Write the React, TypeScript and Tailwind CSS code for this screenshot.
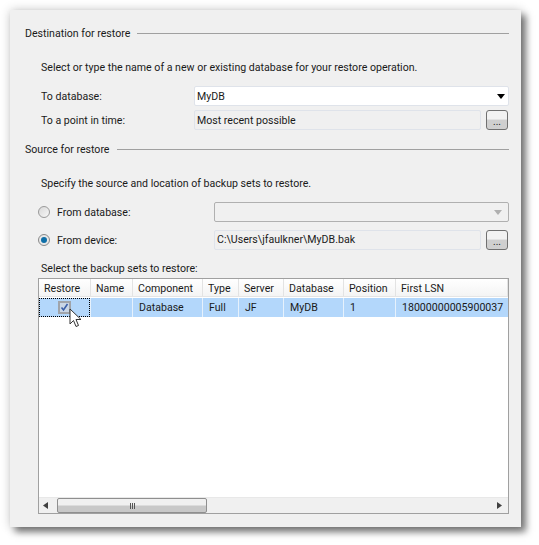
function Group({ title }: { title: string }) {
  return (
    <div className="flex h-[16px] items-center gap-[7px]">
      <span className="whitespace-nowrap pt-[2px]">{title}</span>
      <div className="h-[1px] flex-1 bg-[#a0a0a0]" />
    </div>
  );
}
function Dots() {
  return (
    <div className="flex h-[20px] w-[22px] items-end justify-center rounded-[3px] border border-[#707070] bg-gradient-to-b from-[#f2f2f2] from-45% to-[#cfcfcf] to-50% pb-[2px] text-[10px] leading-[10px]">
      ...
    </div>
  );
}
const cols = [
  { w: 52, h: "Restore", v: "" },
  { w: 42, h: "Name", v: "" },
  { w: 70, h: "Component", v: "Database" },
  { w: 36, h: "Type", v: "Full" },
  { w: 45, h: "Server", v: "JF" },
  { w: 60, h: "Database", v: "MyDB" },
  { w: 52, h: "Position", v: "1" },
  { w: 112, h: "First LSN", v: "18000000005900037" },
];
export default function App() {
  return (
    <div className="h-[545px] w-[539px] overflow-hidden bg-white pl-[10px] pt-[10px] font-['Roboto',sans-serif] text-[10.6px] leading-[16px] text-[#1a1a1a]">
      <div className="flex h-[517px] w-[511px] flex-col bg-[#f0f0f0] pl-[15px] pr-[12px] pt-[15px] shadow-[5px_5px_7px_rgba(0,0,0,0.5),0_0_10px_rgba(0,0,0,0.2)]">
        <Group title="Destination for restore" />
        <div className="ml-[16px] mt-[19px]">Select or type the name of a new or existing database for your restore operation.</div>
        <div className="mt-[10px] flex h-[20px] items-center">
          <span className="w-[169px] pl-[16px] pt-[2px] shrink-0">To database:</span>
          <div className="flex h-[20px] w-[315px] items-center justify-between rounded-[2px] border border-[#dfe3ea] bg-white pl-[2px] pr-[3px]">
            <span className="pt-[1px]">MyDB</span>
            <svg width="8" height="5" viewBox="0 0 8 5"><path d="M0 0h8L4 5z" fill="#000" /></svg>
          </div>
        </div>
        <div className="mt-[4px] flex h-[20px] items-center">
          <span className="w-[169px] pl-[16px] pt-[2px] shrink-0">To a point in time:</span>
          <div className="flex h-[20px] w-[287px] items-center rounded-[2px] border border-[#dfe3ea] bg-[#f0f0f0] pl-[2px]">
            <span className="pt-[1px]">Most recent possible</span>
          </div>
          <div className="ml-[5px]"><Dots /></div>
        </div>
        <div className="mt-[11px]"><Group title="Source for restore" /></div>
        <div className="ml-[16px] mt-[19px]">Specify the source and location of backup sets to restore.</div>
        <div className="mt-[10px] flex h-[20px] items-center">
          <div className="ml-[13px] h-[12px] w-[12px] shrink-0 rounded-full border border-[#9a9a9a] bg-gradient-to-br from-[#d8d8d8] to-[#f8f8f8]" />
          <span className="ml-[7px] w-[157px] pt-[2px] shrink-0">From database:</span>
          <div className="flex h-[20px] w-[295px] items-center justify-end rounded-[2px] border border-[#b0b0b0] bg-[#f0f0f0] pr-[6px]">
            <svg width="8" height="5" viewBox="0 0 8 5"><path d="M0 0h8L4 5z" fill="#b0b0b0" /></svg>
          </div>
        </div>
        <div className="mt-[8px] flex h-[20px] items-center">
          <div className="ml-[13px] flex h-[12px] w-[12px] shrink-0 items-center justify-center rounded-full border border-[#8a8a8a] bg-[#e8e8e8]">
            <div className="h-[6px] w-[6px] rounded-full bg-[#0f6fa8]" />
          </div>
          <span className="ml-[7px] w-[157px] pt-[2px] shrink-0">From device:</span>
          <div className="flex h-[20px] w-[267px] items-center rounded-[2px] border border-[#dfe3ea] bg-[#f0f0f0] pl-[2px]">C:\Users\jfaulkner\MyDB.bak</div>
          <div className="ml-[5px]"><Dots /></div>
        </div>
        <div className="ml-[16px] mt-[11px]">Select the backup sets to restore:</div>
        <div className="relative mt-[1px] ml-[13px] flex h-[236px] w-[471px] flex-col border border-[#a0a0a0] bg-white">
          <div className="flex h-[18px] border-b border-[#e5e5e5] bg-gradient-to-b from-white to-[#f4f4f4]">
            {cols.map((c) => (
              <div key={c.h} style={{ width: c.w }} className="shrink-0 border-r border-[#e3e3e3] pl-[5px] whitespace-nowrap leading-[19px]">{c.h}</div>
            ))}
          </div>
          <div className="mt-[1px] flex h-[19px] bg-[#b3d7fb]">
            {cols.map((c, i) => (
              <div key={c.h} style={{ width: c.w }} className={"relative flex shrink-0 items-center overflow-hidden whitespace-nowrap pl-[6px] " + (i < 7 ? "border-r border-[#e6f1fc]" : "")}>
                {i === 0 ? (
                  <div className="absolute inset-0 flex items-center justify-center border border-dotted border-black">
                    <div className="flex h-[13px] w-[13px] items-center justify-center border-2 border-[#a0a4aa] bg-[#c9d6e6]">
                      <svg width="9" height="9" viewBox="0 0 9 9"><path d="M1.5 4.500l2 2.500 4-6" fill="none" stroke="#3a5fa8" strokeWidth="1.6" /></svg>
                    </div>
                  </div>
                ) : c.v}
              </div>
            ))}
          </div>
          <div className="flex-1" />
          <div className="flex h-[16px] items-center border-t border-[#e8e8e8] bg-[#f0f0f0] pl-[4px]">
            <svg width="5" height="7" viewBox="0 0 5 7" className="shrink-0"><path d="M5 0v7L0 3.500z" fill="#404040" /></svg>
            <div className="ml-[9px] flex h-[15px] w-[150px] items-center justify-center rounded-[2px] border border-[#8f8f8f] bg-gradient-to-b from-[#f0f0f0] from-45% to-[#c8c8c8] to-55%">
              <div className="flex gap-[1px]">
                <div className="h-[6px] w-[1px] bg-[#555]" /><div className="h-[6px] w-[1px] bg-[#555]" /><div className="h-[6px] w-[1px] bg-[#555]" />
              </div>
            </div>
            <div className="flex-1" />
            <svg width="5" height="7" viewBox="0 0 5 7" className="mr-[6px] shrink-0"><path d="M0 0v7L5 3.500z" fill="#404040" /></svg>
          </div>
          <svg width="13" height="21" viewBox="0 0 13 21" className="absolute left-[30px] top-[29px]">
            <path d="M1 1v15l3.500-3.500 2.500 6 2.500-1-2.500-6h5z" fill="#fff" stroke="#333" strokeWidth="1" />
          </svg>
        </div>
      </div>
    </div>
  );
}
